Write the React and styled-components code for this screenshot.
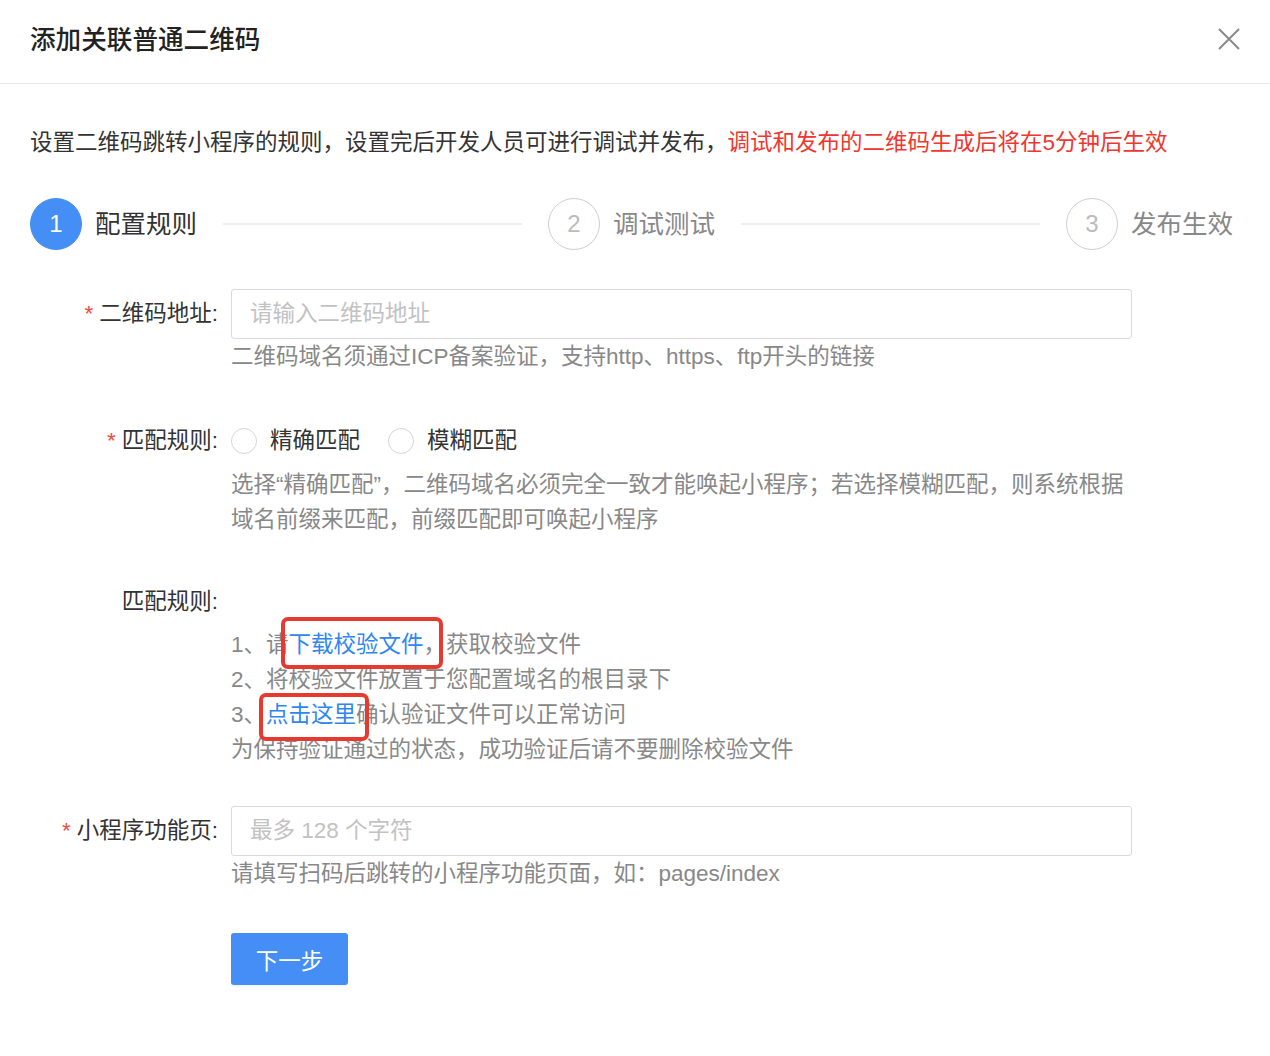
import React from "react";
import styled, { createGlobalStyle } from "styled-components";

const GlobalStyle = createGlobalStyle`
    html, body {
        margin: 0;
        padding: 0;
        background: #fff;
    }
    body {
        font-family: "Liberation Sans", "Noto Sans CJK SC", sans-serif;
        color: #333;
    }
`

const STEPS = [
    { no: 1, name: '配置规则' },
    { no: 2, name: '调试测试' },
    { no: 3, name: '发布生效' },
]

export default function App() {
    return (
        <Page>
            <GlobalStyle />
            <Header>
                <Title>添加关联普通二维码</Title>
                <CloseButton aria-label="close">
                    <svg width="22" height="22" viewBox="0 0 22 22">
                        <path d="M1 1 L21 21 M21 1 L1 21" stroke="#8a8a8a" strokeWidth="2" fill="none" />
                    </svg>
                </CloseButton>
            </Header>

            <Body>
                <Intro>
                    设置二维码跳转小程序的规则，设置完后开发人员可进行调试并发布，
                    <Warn>调试和发布的二维码生成后将在5分钟后生效</Warn>
                </Intro>

                <Steps>
                    {STEPS.map(({ no, name }, index) => (
                        <React.Fragment key={no}>
                            {index > 0 && <StepLine />}
                            <Step>
                                <StepDot active={index === 0}>{no}</StepDot>
                                <StepName active={index === 0}>{name}</StepName>
                            </Step>
                        </React.Fragment>
                    ))}
                </Steps>

                <Form>
                    <FormRow gap={50}>
                        <Label h={50}><Star>*</Star>二维码地址:</Label>
                        <Control>
                            <Input placeholder="请输入二维码地址" />
                            <Help>二维码域名须通过ICP备案验证，支持http、https、ftp开头的链接</Help>
                        </Control>
                    </FormRow>

                    <FormRow gap={48}>
                        <Label h={34}><Star>*</Star>匹配规则:</Label>
                        <Control>
                            <RadioGroup>
                                <Radio><RadioDot />精确匹配</Radio>
                                <Radio><RadioDot />模糊匹配</Radio>
                            </RadioGroup>
                            <Help top={9}>
                                选择“精确匹配”，二维码域名必须完全一致才能唤起小程序；若选择模糊匹配，则系统根据域名前缀来匹配，前缀匹配即可唤起小程序
                            </Help>
                        </Control>
                    </FormRow>

                    <FormRow gap={39}>
                        <Label h={34}>匹配规则:</Label>
                        <Control />
                        <span />
                        <RuleList>
                            <li>
                                1、请<Marked top={-10} bottom={-7} left={-8} right={3}>
                                    <Link>下载校验文件</Link>，
                                </Marked>获取校验文件
                            </li>
                            <li>2、将校验文件放置于您配置域名的根目录下</li>
                            <li>
                                3、<Marked top={-4} bottom={-9} left={-7} right={-13}>
                                    <Link>点击这里</Link>
                                </Marked>确认验证文件可以正常访问
                            </li>
                            <li>为保持验证通过的状态，成功验证后请不要删除校验文件</li>
                        </RuleList>
                    </FormRow>

                    <FormRow gap={0}>
                        <Label h={50}><Star>*</Star>小程序功能页:</Label>
                        <Control>
                            <Input placeholder="最多 128 个字符" />
                            <Help>请填写扫码后跳转的小程序功能页面，如：pages/index</Help>
                        </Control>
                    </FormRow>

                    <FormRow gap={0}>
                        <span />
                        <Actions>
                            <PrimaryButton>下一步</PrimaryButton>
                        </Actions>
                    </FormRow>
                </Form>
            </Body>
        </Page>
    )
}

const Page = styled.div`
    width: 1270px;
    min-height: 1056px;
    background: #fff;
`

const Header = styled.div`
    display: flex;
    align-items: center;
    justify-content: space-between;
    height: 83px;
    padding: 0 30px;
    border-bottom: 1px solid #e9e9e9;
`

const Title = styled.div`
    font-size: 25.6px;
    font-weight: 500;
    color: #222;
    line-height: 34px;
    margin-top: -4px;
`

const CloseButton = styled.div`
    display: flex;
    align-items: center;
    justify-content: center;
    width: 22px;
    height: 22px;
    margin-top: -5px;
    cursor: pointer;
`

const Body = styled.div`
    padding-top: 42px;
`

const Intro = styled.div`
    padding: 0 30px;
    font-size: 22.5px;
    line-height: 34px;
    color: #333;
    white-space: nowrap;
`

const Warn = styled.span`
    color: #f0362f;
`

const Steps = styled.div`
    display: flex;
    align-items: center;
    height: 52px;
    margin-top: 38px;
    padding: 0 37px 0 30px;
`

const Step = styled.div`
    display: flex;
    align-items: center;
    gap: 13px;
`

const StepDot = styled.div`
    box-sizing: border-box;
    display: flex;
    align-items: center;
    justify-content: center;
    width: 52px;
    height: 52px;
    border-radius: 50%;
    font-size: 24px;
    background-color: ${(props) => props.active ? '#448ef6' : '#fff'};
    border: 1px solid ${(props) => props.active ? '#448ef6' : '#cfcfcf'};
    color: ${(props) => props.active ? '#fff' : '#bcbcbc'};
`

const StepName = styled.div`
    font-size: 25.5px;
    line-height: 34px;
    color: ${(props) => props.active ? '#333' : '#888'};
    white-space: nowrap;
`

const StepLine = styled.div`
    flex: 1;
    height: 2px;
    margin: 0 26px;
    background-color: #efefef;
`

const Form = styled.div`
    margin-top: 39px;
`

const FormRow = styled.div`
    display: grid;
    grid-template-columns: 188px 901px;
    column-gap: 13px;
    padding-left: 30px;
    margin-bottom: ${(props) => props.gap}px;
`

const Label = styled.div`
    text-align: right;
    font-size: 22.5px;
    line-height: ${(props) => props.h}px;
    color: #333;
    white-space: nowrap;
`

const Star = styled.span`
    color: #f5483f;
    margin-right: 6px;
    font-family: "Liberation Sans", sans-serif;
`

const Control = styled.div`
    display: flex;
    flex-direction: column;
`

const Actions = styled.div`
    display: flex;
    padding-top: 42px;
`

const Input = styled.input`
    box-sizing: border-box;
    width: 100%;
    height: 50px;
    padding: 0 18px;
    border: 1px solid #dadada;
    border-radius: 3px;
    font-family: "Liberation Sans", "Noto Sans CJK SC", sans-serif;
    font-size: 22.5px;
    color: #333;
    outline: none;

    &::placeholder {
        color: #c2c2c2;
    }
`

const Help = styled.div`
    margin-top: ${(props) => props.top || 0}px;
    font-size: 22.5px;
    line-height: 35px;
    color: #888;
`

const RadioGroup = styled.div`
    display: flex;
    align-items: center;
    height: 34px;
    gap: 28px;
`

const Radio = styled.label`
    display: flex;
    align-items: center;
    gap: 13px;
    font-size: 22.5px;
    line-height: 34px;
    color: #333;
    cursor: pointer;
`

const RadioDot = styled.span`
    box-sizing: border-box;
    width: 26px;
    height: 26px;
    border-radius: 50%;
    border: 1px solid #d6d6d6;
    background: #fff;
`

const RuleList = styled.ul`
    list-style: none;
    margin: 8px 0 0;
    padding: 0;
    font-size: 22.5px;
    line-height: 35px;
    color: #888;

    li {
        height: 35px;
        white-space: nowrap;
    }
`

const Marked = styled.span`
    position: relative;
    display: inline-block;
    vertical-align: top;
    height: 35px;

    &::after {
        content: '';
        position: absolute;
        top: ${(props) => props.top}px;
        bottom: ${(props) => props.bottom}px;
        left: ${(props) => props.left}px;
        right: ${(props) => props.right}px;
        border: 4px solid #e8392f;
        border-radius: 7px;
        pointer-events: none;
    }
`

const Link = styled.span`
    color: #2f86f0;
    cursor: pointer;
`

const PrimaryButton = styled.button`
    width: 117px;
    height: 52px;
    border: none;
    border-radius: 3px;
    background-color: #448ef6;
    color: #fff;
    font-family: "Liberation Sans", "Noto Sans CJK SC", sans-serif;
    font-size: 22.5px;
    box-shadow: 0 2px 0 rgba(0, 0, 0, 0.04);
    cursor: pointer;
`
